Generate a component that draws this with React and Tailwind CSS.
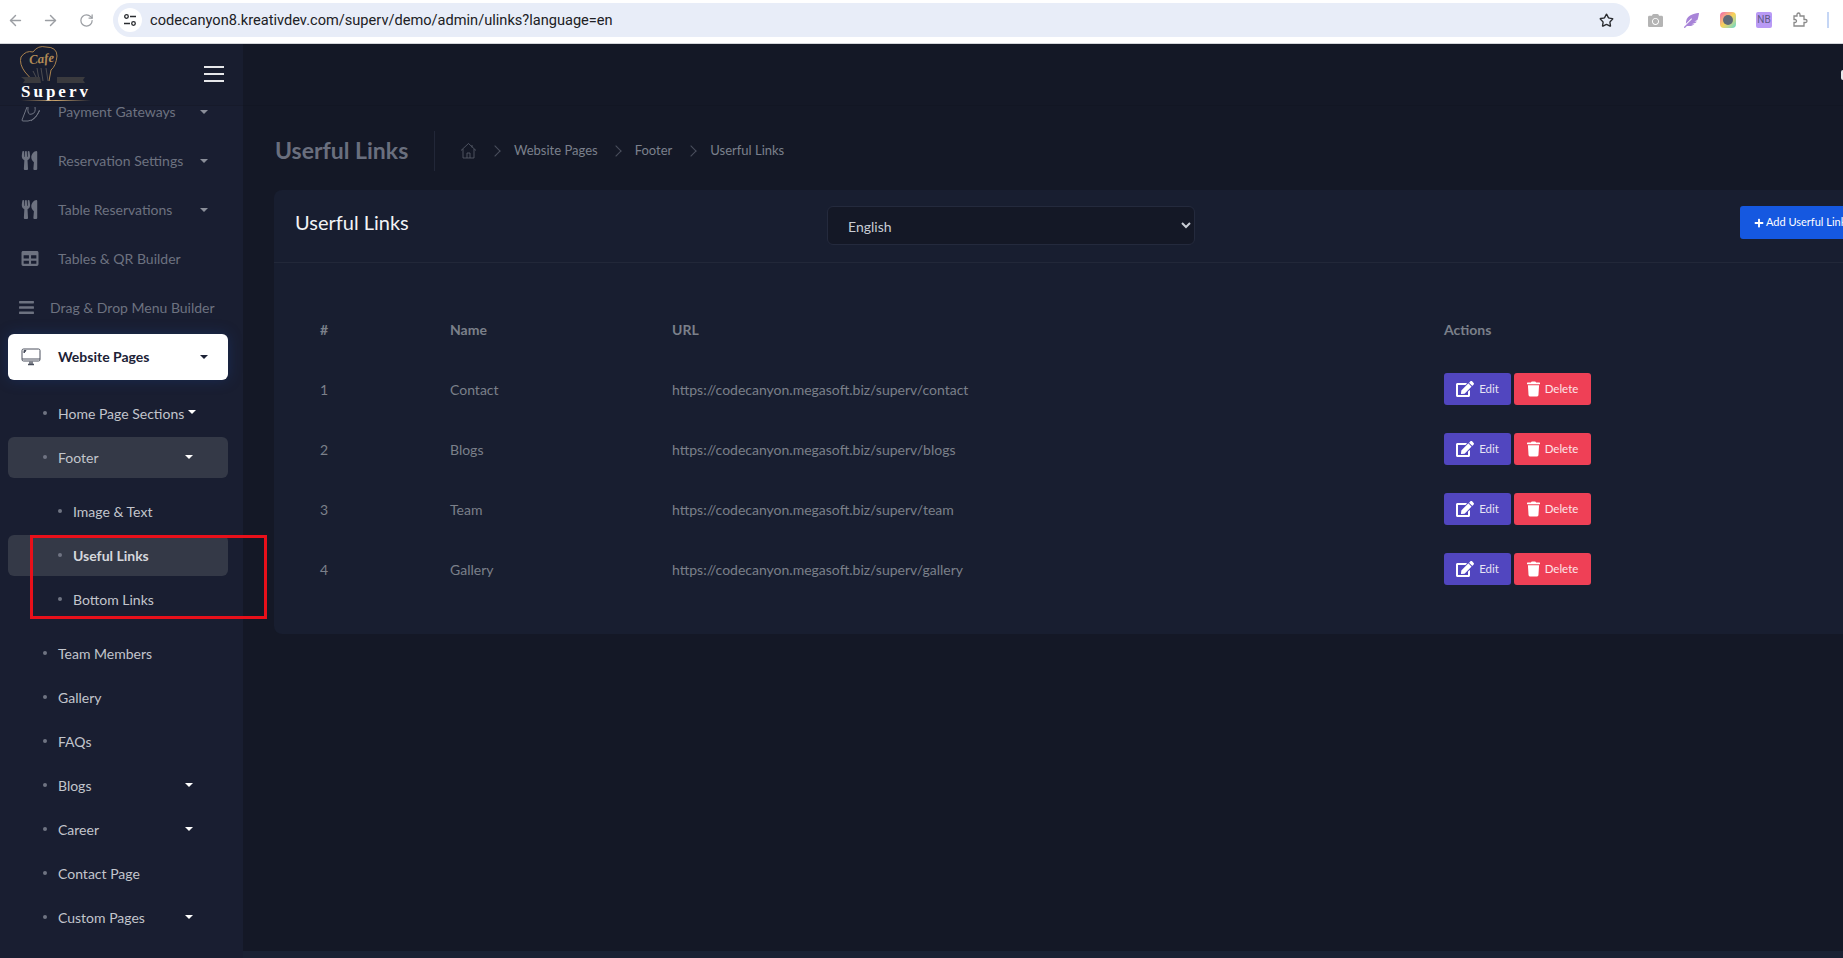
import React from 'react';
import { ArrowLeft, ArrowRight, RotateCw, Star } from 'lucide-react';
import { FaUtensils, FaBars, FaPlus, FaTrash, FaEdit, FaCamera, FaFeatherAlt, FaTable } from 'react-icons/fa';

function Caret({ className = '' }) {
  return <span className={`w-0 h-0 border-x-[4px] border-x-transparent border-t-[4px] ${className}`} />;
}

function Dot({ className = '' }) {
  return <span className={`absolute w-[4px] h-[4px] rounded-full bg-[#6f7482] ${className}`} />;
}

function PaymentIcon() {
  return (
    <svg width="20" height="20" viewBox="0 0 20 20" fill="none" stroke="#6f7482" strokeWidth="1">
      <path d="M6 5 L1 18 L1.500 19 L7 19 Q15 18 18.500 8" />
      <path d="M7 5 Q6 14 11 12 Q15 11 14 5" />
      <path d="M10 19 Q15 16 18.500 9" />
    </svg>
  );
}

function MonitorIcon() {
  return (
    <svg width="20" height="18" viewBox="0 0 20 18" fill="none" stroke="#4a4f5c" strokeWidth="1">
      <rect x="1" y="1" width="18" height="12" rx="1.5" />
      <path d="M1 11h18" />
      <path d="M3 5l2-2.500h-2z" fill="#4a4f5c" />
      <path d="M7 16.500h6M9 13.500v3M11 13.500v3" strokeWidth="1.400" />
    </svg>
  );
}

function MainItem({ icon, label, caret, wide }) {
  return (
    <li className="relative h-[49px] flex items-center text-[#6d7280]">
      <span className={wide ? 'absolute left-[18px] flex' : 'absolute left-[21px] flex'}>{icon}</span>
      <span className={wide ? 'ml-[50px]' : 'ml-[58px]'}>{label}</span>
      {caret && <Caret className="absolute left-[200px] border-t-[#8a8e99]" />}
    </li>
  );
}

function SubItem({ label, caret, active }) {
  return (
    <li className="h-[44px] py-[1.5px]">
      <div className={`relative h-[41px] ml-[8px] mr-[15px] flex items-center rounded-md text-[#c2c5cc] ${active ? 'bg-[#343947]' : ''}`}>
        <Dot className="left-[35px]" />
        <span className="ml-[50px]">{label}</span>
        {caret && <Caret className="absolute left-[177px] border-t-white" />}
      </div>
    </li>
  );
}

function LeafItem({ label, active }) {
  return (
    <li className="h-[44px] py-[1.5px]">
      <div className={`relative h-[41px] ml-[8px] mr-[15px] flex items-center rounded-md ${active ? 'bg-[#343947] text-[#d5d7dc] font-bold' : 'text-[#c2c5cc]'}`}>
        <Dot className="left-[50px]" />
        <span className="ml-[65px]">{label}</span>
      </div>
    </li>
  );
}

function Logo() {
  return (
    <div className="relative w-[80px] h-[60px] ml-[18px]">
      <svg width="80" height="46" viewBox="0 0 80 46" fill="none">
        <path d="M15 37 L7 28 Q1 20 3 13 Q8 6 15 8 Q20 1 28 3 Q39 3 39 12 Q38 22 33 26 L31 37" stroke="#a9824e" strokeWidth="1" />
        <path d="M15 27 L20 37 M23 24 L25 37 M28 24 L30 37 M19 24 L21 36" stroke="#4e4e52" strokeWidth="1" />
        <path d="M3 33 L22 33 L23 39 L5 39 L7 36Z M39 33 L67 33 L65 36 L67 39 L39 39Z" fill="#3a3a3e" />
        <text x="24" y="19" fontFamily="'Liberation Serif', serif" fontStyle="italic" fontWeight="700" fontSize="13" fill="#b18a55" textAnchor="middle" transform="rotate(-6 24 19)">Cafe</text>
      </svg>
      <div className="absolute left-[3px] top-[40px] font-['Liberation_Serif',serif] font-bold text-[17px] leading-[16px] tracking-[3px] text-white">Superv</div>
      <div className="absolute left-[3px] top-[56px] w-[70px] h-[1px] bg-gradient-to-r from-transparent via-[#c9a36c] to-transparent" />
    </div>
  );
}

const rows = [
  ['1', 'Contact', 'https://codecanyon.megasoft.biz/superv/contact'],
  ['2', 'Blogs', 'https://codecanyon.megasoft.biz/superv/blogs'],
  ['3', 'Team', 'https://codecanyon.megasoft.biz/superv/team'],
  ['4', 'Gallery', 'https://codecanyon.megasoft.biz/superv/gallery'],
];

export default function App() {
  return (
    <div className="relative w-[1843px] h-[958px] overflow-hidden flex flex-col bg-[#141826] font-['Lato','Noto_Sans',sans-serif] text-[14px]">
      {/* browser bar */}
      <div className="h-[44px] shrink-0 bg-white border-b border-[#d4d6da] pb-[3px] flex items-center font-['Roboto',sans-serif]">
        <ArrowLeft className="ml-[7px] w-[17px] h-[17px] text-[#9b9ea3]" />
        <ArrowRight className="ml-[18px] w-[17px] h-[17px] text-[#9b9ea3]" />
        <RotateCw className="ml-[20px] w-[15px] h-[15px] text-[#9b9ea3]" />
        <div className="ml-[19px] w-[1517px] h-[34px] rounded-full bg-[#e8edf8] flex items-center">
          <span className="ml-[5px] w-[24px] h-[24px] rounded-full bg-white flex items-center justify-center">
            <svg width="14" height="14" viewBox="0 0 14 14" fill="none" stroke="#2a2c30" strokeWidth="1.300">
              <circle cx="3.500" cy="3.500" r="1.800" />
              <path d="M7 3.500h6M1 10.500h6" />
              <circle cx="10.500" cy="10.500" r="1.800" />
            </svg>
          </span>
          <span className="ml-[8px] pt-[2px] text-[14.6px] text-[#202124]">codecanyon8.kreativdev.com/superv/demo/admin/ulinks?language=en</span>
          <Star className="ml-auto mr-[16px] w-[15px] h-[15px] text-[#2a2c30]" strokeWidth={2.2} />
        </div>
        <FaCamera className="ml-[18px] w-[15px] h-[15px] text-[#b4b4b4]" />
        <FaFeatherAlt className="ml-[21px] w-[15px] h-[15px] text-[#a884d8]" />
        <span className="ml-[21px] w-[16px] h-[16px] rounded-[4px] bg-gradient-to-br from-[#ef5da8] via-[#f7d354] to-[#4ad6c8] flex items-center justify-center">
          <span className="w-[10px] h-[10px] rounded-full bg-[#5f6a78]" />
        </span>
        <span className="ml-[20px] w-[16px] h-[16px] rounded-[2px] bg-[#b99af5] text-[10px] leading-[16px] text-center text-[#5e5a86]">NB</span>
        <svg className="ml-[20px]" width="16" height="16" viewBox="0 0 16 16" fill="none" stroke="#8a8a8a" strokeWidth="1.300">
          <path d="M2 4h3V2.500a1.500 1.500 0 0 1 3 0V4h4v3.500h1.500a1.500 1.500 0 0 1 0 3H12V14H2v-3.500h1a1.500 1.500 0 0 0 0-3H2z" />
        </svg>
        <span className="ml-[19px] w-[2px] h-[16px] bg-[#c5d6f5]" />
      </div>

      <div className="flex-1 min-h-0 flex">
        {/* sidebar */}
        <aside className="w-[243px] shrink-0 bg-[#191e31] flex flex-col overflow-hidden">
          <div className="h-[62px] shrink-0 bg-[#181d2f] flex items-start relative z-10 border-b border-[#161a2a]">
            <Logo />
            <span className="absolute left-[204px] top-[22px] w-[20px] flex flex-col gap-[5px]">
              <span className="h-[2px] bg-[#e6e7ea]" />
              <span className="h-[2px] bg-[#e6e7ea]" />
              <span className="h-[2px] bg-[#e6e7ea]" />
            </span>
          </div>
          <nav className="-mt-[19px]">
            <ul>
              <MainItem icon={<PaymentIcon />} label="Payment Gateways" caret />
              <MainItem icon={<FaUtensils className="w-[17px] h-[19px]" />} label="Reservation Settings" caret />
              <MainItem icon={<FaUtensils className="w-[17px] h-[19px]" />} label="Table Reservations" caret />
              <MainItem icon={<FaTable className="w-[18px] h-[17px]" />} label="Tables & QR Builder" />
              <MainItem wide icon={<FaBars className="w-[17px] h-[17px]" />} label="Drag & Drop Menu Builder" />
              <li className="h-[49px] py-[1.5px]">
                <div className="relative h-[46px] ml-[8px] mr-[15px] bg-white rounded-md flex items-center font-bold text-[#1c2236] shadow-[0_0_14px_rgba(30,70,150,0.35)]">
                  <span className="absolute left-[13px] flex"><MonitorIcon /></span>
                  <span className="ml-[50px] -mt-[1px]">Website Pages</span>
                  <Caret className="absolute left-[192px] border-t-[#1c2236]" />
                </div>
              </li>
            </ul>
            <ul className="mt-[10px]">
              <li className="h-[44px] py-[1.5px]">
                <div className="relative h-[41px] ml-[8px] mr-[15px] flex items-center text-[#c2c5cc]">
                  <Dot className="left-[35px]" />
                  <span className="ml-[50px]">Home Page Sections</span>
                  <Caret className="ml-[4px] -mt-[2px] border-t-white" />
                </div>
              </li>
              <SubItem label="Footer" caret active />
              <ul className="pt-[10px] pb-[10px]">
                <LeafItem label="Image & Text" />
                <LeafItem label="Useful Links" active />
                <LeafItem label="Bottom Links" />
              </ul>
              <SubItem label="Team Members" />
              <SubItem label="Gallery" />
              <SubItem label="FAQs" />
              <SubItem label="Blogs" caret />
              <SubItem label="Career" caret />
              <SubItem label="Contact Page" />
              <SubItem label="Custom Pages" caret />
            </ul>
          </nav>
        </aside>

        {/* main */}
        <main className="flex-1 min-w-0 flex flex-col overflow-hidden">
          <div className="h-[62px] shrink-0 border-b border-[#121623] flex items-center justify-end">
            <span className="w-[2px] h-[10px] rounded-l-full bg-[#e6e7ea]" />
          </div>
          <div className="h-[84px] shrink-0 flex items-center pl-[32px] pt-[5px]">
            <h1 className="text-[23px] font-bold text-[#6a6f7e] leading-[32px] w-[125px] -mt-[2px] whitespace-nowrap">Userful Links</h1>
            <span className="ml-[34px] w-px h-[40px] bg-[#222738]" />
            <svg className="ml-[25px]" width="17" height="17" viewBox="0 0 17 17" fill="none" stroke="#5a5f6d" strokeWidth="0.800">
              <path d="M1 8.500L8.500 1.500L16 8.500M3 7v9h11V7M7 16v-5h3v5M12 3v2.500" />
            </svg>
            <span className="ml-[14px] w-[8px] h-[8px] border-t border-r border-[#4a4f5d] rotate-45" />
            <span className="ml-[15px] text-[13px] text-[#7b808c]">Website Pages</span>
            <span className="ml-[14px] w-[8px] h-[8px] border-t border-r border-[#4a4f5d] rotate-45" />
            <span className="ml-[15px] text-[13px] text-[#7b808c]">Footer</span>
            <span className="ml-[15px] w-[8px] h-[8px] border-t border-r border-[#4a4f5d] rotate-45" />
            <span className="ml-[15px] text-[13px] text-[#7b808c]">Userful Links</span>
          </div>
          <div className="ml-[31px] w-[1700px] shrink-0 h-[444px] bg-[#181e30] rounded-lg">
            <div className="h-[73px] border-b border-[#222839] pt-[16px] pl-[21px] flex items-start">
              <h2 className="w-[532px] text-[20px] leading-[33px] text-[#f2f3f5]">Userful Links</h2>
              <select className="w-[368px] h-[39px] pl-[16px] pt-[2px] bg-[#141826] border border-[#242a3d] rounded-md text-[14px] text-[#c8ccd4]">
                <option>English</option>
              </select>
              <button className="ml-[545px] w-[140px] h-[33px] bg-[#1558e0] rounded-[3px] pl-[14px] flex items-center text-[11px] text-white whitespace-nowrap">
                <FaPlus className="w-[10px] h-[10px] mr-[2px]" />
                Add Userful Link
              </button>
            </div>
            <table className="mt-[37px] w-full table-fixed text-left">
              <colgroup>
                <col className="w-[176px]" />
                <col className="w-[222px]" />
                <col className="w-[772px]" />
                <col />
              </colgroup>
              <thead>
                <tr className="h-[60px] text-[#7b808a]">
                  <th className="pl-[46px] pb-[2px] font-bold">#</th>
                  <th className="pb-[2px] font-bold">Name</th>
                  <th className="pb-[2px] font-bold">URL</th>
                  <th className="pb-[2px] font-bold">Actions</th>
                </tr>
              </thead>
              <tbody>
                {rows.map((r) => (
                  <tr key={r[0]} className="h-[60px] text-[#7b808a]">
                    <td className="pl-[46px] pb-[2px]">{r[0]}</td>
                    <td className="pb-[2px]">{r[1]}</td>
                    <td className="pb-[2px]">{r[2]}</td>
                    <td>
                      <div className="flex gap-[3px] -mt-[2px]">
                        <button className="w-[67px] h-[32px] bg-[#5146bf] rounded-[3px] flex items-center justify-center gap-[5px] text-[11.5px] text-[#e6e4f5]">
                          <FaEdit className="w-[18px] h-[16px] text-white" />
                          Edit
                        </button>
                        <button className="w-[77px] h-[32px] bg-[#ef4056] rounded-[3px] flex items-center justify-center gap-[5px] text-[11.5px] text-[#fde4e7]">
                          <FaTrash className="w-[13px] h-[16px] text-white" />
                          Delete
                        </button>
                      </div>
                    </td>
                  </tr>
                ))}
              </tbody>
            </table>
          </div>
          <div className="mt-auto h-[7px] shrink-0 bg-[#1a2133]" />
        </main>
      </div>

      {/* annotation */}
      <div className="absolute left-[30px] top-[535px] w-[237px] h-[84px] border-[3px] border-[#e8101a]" />
    </div>
  );
}
